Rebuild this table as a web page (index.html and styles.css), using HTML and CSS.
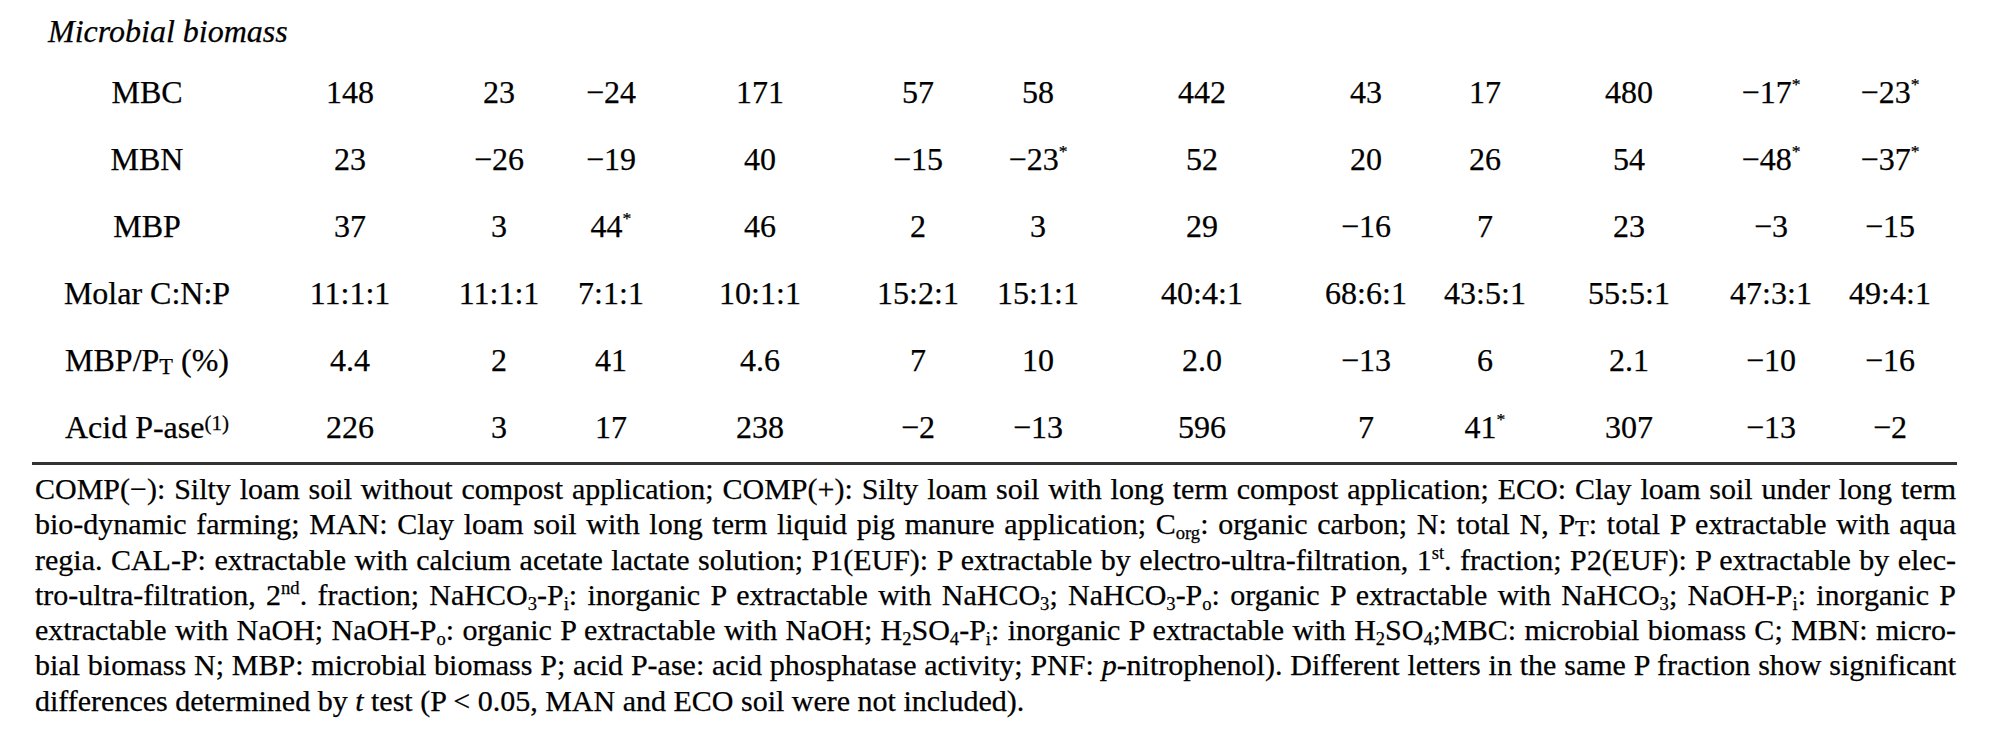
FILE: index.html
```html
<!DOCTYPE html>
<html lang="en">
<head>
<meta charset="utf-8">
<title>Microbial biomass</title>
<link rel="stylesheet" href="styles.css">
</head>
<body>
<div class="page">
  <div class="section-title">Microbial biomass</div>
  <div class="data">
    <div class="lbl">MBC</div><div>148</div><div>23</div><div>&minus;24</div><div>171</div><div>57</div><div>58</div><div>442</div><div>43</div><div>17</div><div>480</div><div>&minus;17<sup class="ast">*</sup></div><div>&minus;23<sup class="ast">*</sup></div>
    <div class="lbl">MBN</div><div>23</div><div>&minus;26</div><div>&minus;19</div><div>40</div><div>&minus;15</div><div>&minus;23<sup class="ast">*</sup></div><div>52</div><div>20</div><div>26</div><div>54</div><div>&minus;48<sup class="ast">*</sup></div><div>&minus;37<sup class="ast">*</sup></div>
    <div class="lbl">MBP</div><div>37</div><div>3</div><div>44<sup class="ast">*</sup></div><div>46</div><div>2</div><div>3</div><div>29</div><div>&minus;16</div><div>7</div><div>23</div><div>&minus;3</div><div>&minus;15</div>
    <div class="lbl">Molar C:N:P</div><div>11:1:1</div><div>11:1:1</div><div>7:1:1</div><div>10:1:1</div><div>15:2:1</div><div>15:1:1</div><div>40:4:1</div><div>68:6:1</div><div>43:5:1</div><div>55:5:1</div><div>47:3:1</div><div>49:4:1</div>
    <div class="lbl">MBP/P<sub class="lsub">T</sub> (%)</div><div>4.4</div><div>2</div><div>41</div><div>4.6</div><div>7</div><div>10</div><div>2.0</div><div>&minus;13</div><div>6</div><div>2.1</div><div>&minus;10</div><div>&minus;16</div>
    <div class="lbl">Acid P-ase<sup class="lsup">(1)</sup></div><div>226</div><div>3</div><div>17</div><div>238</div><div>&minus;2</div><div>&minus;13</div><div>596</div><div>7</div><div>41<sup class="ast">*</sup></div><div>307</div><div>&minus;13</div><div>&minus;2</div>
  </div>
  <div class="rule"></div>
  <div class="notes">
    <div class="ln">COMP(&minus;): Silty loam soil without compost application; COMP(+): Silty loam soil with long term compost application; ECO: Clay loam soil under long term</div>
    <div class="ln">bio-dynamic farming; MAN: Clay loam soil with long term liquid pig manure application; C<sub>org</sub>: organic carbon; N: total N, P<sub class="big">T</sub>: total P extractable with aqua</div>
    <div class="ln">regia. CAL-P: extractable with calcium acetate lactate solution; P1(EUF): P extractable by electro-ultra-filtration, 1<sup>st</sup>. fraction; P2(EUF): P extractable by elec-</div>
    <div class="ln">tro-ultra-filtration, 2<sup>nd</sup>. fraction; NaHCO<sub>3</sub>-P<sub>i</sub>: inorganic P extractable with NaHCO<sub>3</sub>; NaHCO<sub>3</sub>-P<sub>o</sub>: organic P extractable with NaHCO<sub>3</sub>; NaOH-P<sub>i</sub>: inorganic P</div>
    <div class="ln">extractable with NaOH; NaOH-P<sub>o</sub>: organic P extractable with NaOH; H<sub>2</sub>SO<sub>4</sub>-P<sub>i</sub>: inorganic P extractable with H<sub>2</sub>SO<sub>4</sub>;MBC: microbial biomass C; MBN: micro-</div>
    <div class="ln">bial biomass N; MBP: microbial biomass P; acid P-ase: acid phosphatase activity; PNF: <i>p</i>-nitrophenol). Different letters in the same P fraction show significant</div>
    <div class="ln last">differences determined by <i>t</i> test (P &lt; 0.05, MAN and ECO soil were not included).</div>
  </div>
</div>
</body>
</html>
```
FILE: styles.css
```css
html, body {
  margin: 0;
  padding: 0;
  background: #ffffff;
}

body {
  color: #000000;
  font-family: "Liberation Serif", "Times New Roman", serif;
  -webkit-text-stroke: 0.25px #000000;
}

.page {
  padding: 11px 48px 0 32px;
}

.section-title {
  font-style: italic;
  font-size: 32px;
  line-height: 40px;
  margin-left: 16px;
}

.data {
  display: grid;
  grid-template-columns: 230px 176px 122px 102px 196px 120px 120px 208px 120px 118px 170px 114px 124px;
  grid-auto-rows: 67px;
  margin-top: 8px;
  font-size: 32px;
  line-height: 67px;
  text-align: center;
  white-space: nowrap;
}

.ast {
  font-size: 0.55em;
  line-height: 0;
  vertical-align: 0.75em;
}

.lsub {
  font-size: 0.7em;
  line-height: 0;
  vertical-align: -0.15em;
}

.lsup {
  font-size: 0.66em;
  line-height: 0;
  vertical-align: 0.4em;
}

.rule {
  height: 3px;
  margin-top: 1px;
  background: #333333;
}

.notes {
  padding: 6px 1px 0 3px;
  font-size: 30px;
  line-height: 35.3px;
}

.ln {
  text-align: justify;
  text-align-last: justify;
}

.ln.last {
  text-align-last: left;
}

.notes sub,
.notes sup {
  font-size: 0.62em;
  line-height: 0;
}

.notes sub {
  vertical-align: -0.25em;
}

.notes sub.big {
  font-size: 0.75em;
  vertical-align: -0.1em;
}

.notes sup {
  vertical-align: 0.6em;
}
```
